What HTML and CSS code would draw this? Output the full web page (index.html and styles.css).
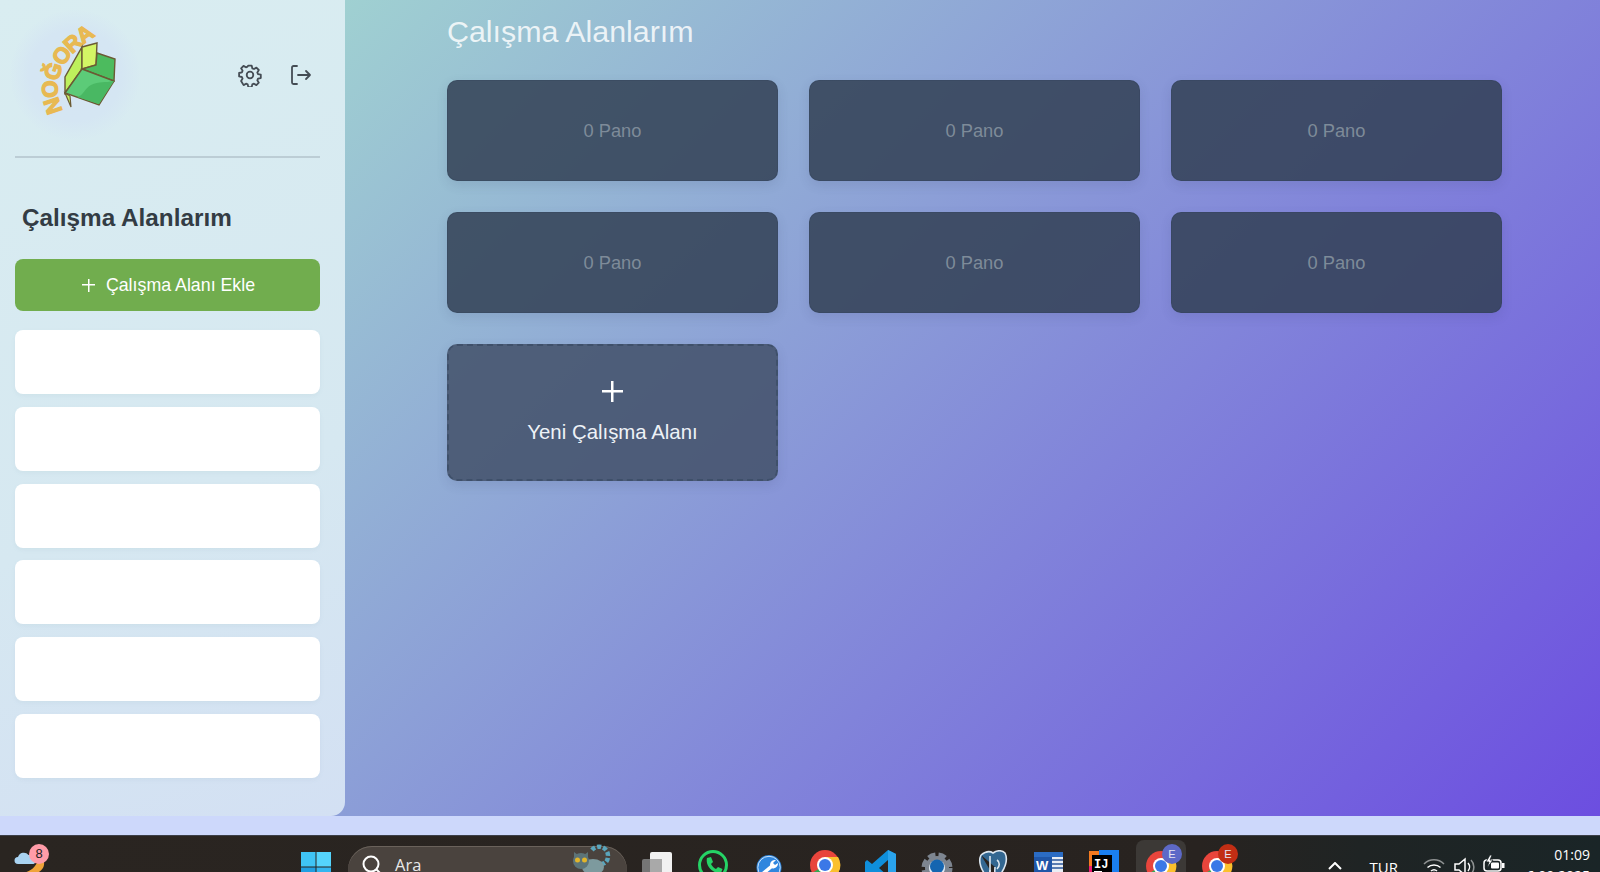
FILE: index.html
```html
<!DOCTYPE html>
<html lang="tr">
<head>
<meta charset="utf-8">
<title>Çalışma Alanlarım</title>
<link rel="stylesheet" href="styles.css">
</head>
<body>
<div class="app">
  <aside class="sidebar">
    <div class="side-head">
      <div class="logo">
        <svg viewBox="0 0 130 130" width="130" height="130">
          <defs><path id="arc" d="M53 101 Q 33 58 87 25"/></defs>
          <text class="logo-text"><textPath href="#arc">NOĞORA</textPath></text>
          <path d="M55 83l6 14-1-11z" fill="#c7ee63" stroke="#6b5a34" stroke-width="1.200"/>
          <path d="M55 83V67L72 37v22z" fill="#bdf05c" stroke="#6b5a34" stroke-width="1.400"/>
          <path d="M72 37l15-4-1 22-14 4z" fill="#d3f565" stroke="#6b5a34" stroke-width="1.400"/>
          <path d="M87 43l18 6-1 22-32-12 14-4z" fill="#4cbb5e" stroke="#6b5a34" stroke-width="1.400"/>
          <path d="M72 59l32 12-15 24-34-12z" fill="#5ccb78" stroke="#6b5a34" stroke-width="1.400"/>
          <path d="M104 71L89 94 67 87c6-1 8-9 14-12 8-4 14-2 23-4z" fill="#49b863"/>
        </svg>
      </div>
      <div class="head-icons">
        <svg class="icon" viewBox="0 0 24 24" width="24" height="24"><path d="M10.300 2.600h3.400l.6 2.700 1.700.7 2.400-1.400 2.400 2.400-1.500 2.400.7 1.700 2.800.6v3.400l-2.800.6-.7 1.600 1.500 2.400-2.400 2.400-2.400-1.400-1.700.7-.6 2.700h-3.400l-.6-2.700-1.700-.7-2.400 1.400L3.100 18l1.500-2.400-.7-1.600-2.800-.6V10l2.800-.6.7-1.700L3.100 5.300l2.400-2.400 2.400 1.400 1.700-.7z"/><circle cx="12" cy="12" r="3.300"/></svg>
        <svg class="icon" viewBox="0 0 24 24" width="24" height="24"><path d="M8 3H4.500A1.500 1.500 0 0 0 3 4.500v15A1.500 1.500 0 0 0 4.500 21H8M9 12h12M17 8l4 4-4 4"/></svg>
      </div>
    </div>
    <hr class="divider">
    <h2 class="side-title">Çalışma Alanlarım</h2>
    <button class="add-btn"><span class="plus-sm"></span>Çalışma Alanı Ekle</button>
    <ul class="side-list">
      <li></li><li></li><li></li><li></li><li></li><li></li>
    </ul>
  </aside>
  <main class="main">
    <h1 class="main-title">Çalışma Alanlarım</h1>
    <div class="grid">
      <div class="card">0 Pano</div>
      <div class="card">0 Pano</div>
      <div class="card">0 Pano</div>
      <div class="card">0 Pano</div>
      <div class="card">0 Pano</div>
      <div class="card">0 Pano</div>
      <div class="card new"><span class="plus-lg"></span><span>Yeni Çalışma Alanı</span></div>
    </div>
  </main>
</div>
<div class="strip"></div>
<footer class="taskbar">
  <div class="weather">
    <svg viewBox="0 0 36 37" width="36" height="37">
      <path d="M12 37c9-1 15-7 16-14l6 3c1 6-4 11-9 11z" fill="#f0a43a"/>
      <path d="M8 28a3.500 3.500 0 0 1 0-7 6 6 0 0 1 10.500-2 4.500 4.500 0 0 1 6 4.500 2.500 2.500 0 0 1-1 4.500z" fill="#a9d3f2"/>
    </svg>
    <span class="badge">8</span>
  </div>
  <div class="task-center">
    <svg class="win" viewBox="0 0 32 32" width="32" height="32">
      <rect x="1" y="1" width="14.500" height="14.500" fill="#3fc4f5"/><rect x="16.500" y="1" width="14.500" height="14.500" fill="#55d4fc"/>
      <rect x="1" y="16.500" width="14.500" height="14.500" fill="#1f9fe2"/><rect x="16.500" y="16.500" width="14.500" height="14.500" fill="#33b6f0"/>
    </svg>
    <div class="search">
      <svg class="lens" viewBox="0 0 24 24" width="24" height="24"><circle cx="11" cy="11" r="7.500"/><path d="M16.500 16.500L21 21"/></svg>
      <span class="search-text">Ara</span>
      <svg class="lemur" viewBox="0 0 40 32" width="40" height="32">
        <path d="M20 6a9 9 0 0 1 16 6c0 5-3 8-7 8" fill="none" stroke="#5aa6bd" stroke-width="4.500" stroke-dasharray="4 2"/>
        <ellipse cx="21" cy="23" rx="11" ry="8" fill="#7d9a9e"/>
        <circle cx="9" cy="17" r="8" fill="#5c7478"/>
        <path d="M2 8l4 3-4 3zM16 8l-4 3 4 3z" fill="#5c7478"/>
        <circle cx="5.500" cy="16" r="2.500" fill="#e2b52a"/><circle cx="12.500" cy="16" r="2.500" fill="#e2b52a"/>
      </svg>
    </div>
    <div class="apps">
      <svg viewBox="0 0 34 36" width="34" height="36"><rect x="2" y="9" width="20" height="27" rx="2" fill="#757575"/><rect x="10" y="2" width="22" height="34" rx="2" fill="#f1f1f1"/><rect x="10" y="9" width="12" height="27" fill="#a9a9a9"/></svg>
      <svg viewBox="0 0 34 36" width="34" height="36"><circle cx="17" cy="15" r="13.500" fill="none" stroke="#25d366" stroke-width="3"/><path d="M11 8c-2 8 6 16 14 15l1.500-4-4.500-2-2 2c-2-.5-4-3-5-5l2-2-2-5z" fill="#25d366"/></svg>
      <svg viewBox="0 0 34 36" width="34" height="36"><circle cx="17" cy="17.500" r="12.500" fill="#2f86de"/><circle cx="17" cy="17.500" r="11.200" fill="none" stroke="#cfe6fa" stroke-width="1"/><path d="M8 26l12-10" stroke="#fff" stroke-width="3.500"/><path d="M18 15a5 5 0 0 1 6-5l-3 3 2 2 3-2a5 5 0 0 1-7 5z" fill="#fff"/></svg>
      <svg viewBox="0 0 34 36" width="34" height="36"><circle cx="17" cy="15" r="15" fill="#e8453c"/><path d="M17 15L4 23a15 15 0 0 0 15 7z" fill="#34a853"/><path d="M17 7h13a15 15 0 0 1-11 23z" fill="#fbc02d"/><circle cx="17" cy="15" r="8" fill="#fff"/><circle cx="17" cy="15" r="6" fill="#3b78e7"/></svg>
      <svg viewBox="0 0 34 36" width="34" height="36"><path d="M24 0l8 4v28l-8 4L8 22l-5 4-2-2V12l2-2 5 4z" fill="#0f8fdb"/><path d="M24 10l-9 8 9 8z" fill="#2a2521"/><path d="M24 0l8 4v28l-8 4z" fill="#2aa3ec"/></svg>
      <svg viewBox="0 0 34 36" width="34" height="36"><circle cx="17" cy="18" r="12.500" fill="none" stroke="#7d8590" stroke-width="6" stroke-dasharray="7 3"/><circle cx="17" cy="18" r="12" fill="#7d8590"/><circle cx="17" cy="18" r="8" fill="#dfe9f3"/><circle cx="17" cy="16.500" r="7" fill="#1565b0"/></svg>
      <svg viewBox="0 0 34 36" width="34" height="36"><path d="M5 5c5-4 9-4 12-2 4-3 9-3 12 0 3 6 0 14-3 19 0 4-3 7-6 5-2-3-1-7-1-10M5 5c-3 6 0 13 3 18 3 4 6 1 6-3" fill="#336791" stroke="#dce6ef" stroke-width="1.600"/><path d="M14 6v16c0 5 3 7 5 9M21 10c3 2 3 6 0 9" fill="none" stroke="#dce6ef" stroke-width="1.600"/></svg>
      <svg viewBox="0 0 34 36" width="34" height="36"><rect x="2" y="2" width="29" height="34" fill="#e9eef5"/><rect x="2" y="2" width="29" height="5" fill="#2b6cc4"/><path d="M20 10h11M20 14h11M20 18h11" stroke="#2b579a" stroke-width="1.500"/><rect x="2" y="7" width="18" height="29" fill="#1f56a8"/><text x="4" y="20" class="w">W</text></svg>
      <svg viewBox="0 0 34 36" width="34" height="36"><path d="M1 1h10v26H1z" fill="#f47a20"/><path d="M11 0h20v22H11z" fill="#1a7ff0"/><path d="M1 16h6v20H1z" fill="#ec1e73"/><rect x="4" y="5" width="20" height="31" fill="#000"/><text x="6" y="18" class="ij">IJ</text><rect x="6" y="21" width="8" height="1.500" fill="#fff"/></svg>
      <div class="chrome active">
        <svg viewBox="0 0 34 36" width="34" height="36"><circle cx="17" cy="16" r="15" fill="#e8453c"/><path d="M17 16L4 24a15 15 0 0 0 15 7z" fill="#34a853"/><path d="M17 8h13a15 15 0 0 1-11 23z" fill="#fbc02d"/><circle cx="17" cy="16" r="8" fill="#fff"/><circle cx="17" cy="16" r="6" fill="#3b78e7"/></svg>
        <span class="avatar purple">E</span>
      </div>
      <div class="chrome">
        <svg viewBox="0 0 34 36" width="34" height="36"><circle cx="17" cy="16" r="15" fill="#e8453c"/><path d="M17 16L4 24a15 15 0 0 0 15 7z" fill="#34a853"/><path d="M17 8h13a15 15 0 0 1-11 23z" fill="#fbc02d"/><circle cx="17" cy="16" r="8" fill="#fff"/><circle cx="17" cy="16" r="6" fill="#3b78e7"/></svg>
        <span class="avatar red">E</span>
      </div>
    </div>
  </div>
  <div class="tray">
    <svg class="chev" viewBox="0 0 14 8" width="14" height="8"><path d="M1 7l6-6 6 6"/></svg>
    <span class="lang">TUR</span>
    <div class="tray-icons">
      <svg viewBox="0 0 22 22" width="22" height="22"><path d="M1 9a14 14 0 0 1 20 0" opacity=".5"/><path d="M4.500 12.500a9.500 9.500 0 0 1 13 0M8 16a4.500 4.500 0 0 1 6 0"/><circle cx="11" cy="19" r="1.500" fill="#fff"/></svg>
      <svg viewBox="0 0 22 22" width="22" height="22"><path d="M2 9h4l6-5v16l-6-5H2zM15 8a6 6 0 0 1 0 8"/><path d="M18 5a10 10 0 0 1 0 14" opacity=".5"/></svg>
      <svg viewBox="0 0 22 22" width="22" height="22"><rect x="1" y="5" width="17" height="11" rx="3"/><rect x="19" y="8" width="2.500" height="5" fill="#fff" stroke="none"/><rect x="8" y="7.500" width="8" height="6" rx="1" fill="#fff" stroke="none"/><path d="M7 0L3 7h3L4 13l6-8H7l2-5z" fill="#fff" stroke="#1c2526" stroke-width=".8"/></svg>
    </div>
    <div class="clock"><span>01:09</span><span>6.09.2025</span></div>
  </div>
</footer>
</body>
</html>
```
FILE: styles.css
```css
* { box-sizing: border-box; }
html, body { margin: 0; height: 872px; overflow: hidden; }
body { width: 1600px; font-family: "Liberation Sans", Arial, sans-serif; background: #cdd8fb; }
.app { display: flex; height: 816px; background: linear-gradient(135deg, #a8e6cf 0%, #6c4ee0 100%); }
.sidebar { width: 345px; height: 816px; padding: 0 25px 0 15px; border-bottom-right-radius: 14px; background: linear-gradient(160deg, #d9edf1 0%, #d6e8f1 60%, #d3e0f3 100%); flex: none; }
.side-head { display: flex; align-items: center; justify-content: space-between; height: 156px; padding-bottom: 6px; }
.logo { width: 130px; height: 130px; margin-left: -5px; border-radius: 50%; background: radial-gradient(circle, #d5e5f3 0%, #d5e6f3 50%, rgba(214,232,241,0) 72%); }
.logo-text { font: bold 22px "Liberation Sans", sans-serif; letter-spacing: -1.500px; fill: #e8b952; stroke: #e8b952; stroke-width: 1.300; }
.head-icons { display: flex; gap: 27px; padding-right: 7px; }
.icon { fill: none; stroke: #444c54; stroke-width: 1.800; stroke-linecap: round; stroke-linejoin: round; }
.divider { margin: 0; border: 0; height: 2px; background: #bccdd5; }
.side-title { margin: 46px 0 27px 7px; font-size: 24.300px; line-height: 28px; font-weight: 700; color: #333c44; }
.add-btn { display: flex; align-items: center; justify-content: center; gap: 11px; width: 100%; height: 52px; padding: 0 0 0 2px; border: 0; border-radius: 8px; background: #71ad4e; color: #fff; font: 17.800px "Liberation Sans", sans-serif; }
.plus-sm, .plus-lg { display: block; flex: none; }
.plus-sm { width: 13px; height: 13px; background: linear-gradient(#fff, #fff) center/13px 1.500px no-repeat, linear-gradient(#fff, #fff) center/1.500px 13px no-repeat; }
.side-list { list-style: none; margin: 19px 0 0; padding: 0; display: flex; flex-direction: column; gap: 12.800px; }
.side-list li { height: 64px; border-radius: 8px; background: #fff; box-shadow: 0 2px 4px rgba(120,150,170,.08); }
.main { flex: 1; padding: 0 98px 0 102px; }
.main-title { margin: 13px 0 30px; font-size: 30.400px; line-height: 37px; font-weight: 400; color: rgba(255,255,255,.82); }
.grid { display: grid; grid-template-columns: repeat(3, 1fr); gap: 31px; }
.card { display: flex; align-items: center; justify-content: center; height: 101px; padding-top: 1px; border-radius: 10px; background: rgba(49,63,83,.85); border: 1px solid rgba(45,58,85,.25); color: #7e8b99; font-size: 18.300px; box-shadow: 0 4px 12px rgba(40,50,90,.12); }
.card.new { flex-direction: column; height: 137px; gap: 19px; padding-top: 0; background: rgba(66,80,104,.85); border: 2px dashed #3f506a; color: #eef2f7; font-size: 20.400px; }
.plus-lg { width: 21px; height: 21px; background: linear-gradient(#fff, #fff) center/21px 2.500px no-repeat, linear-gradient(#fff, #fff) center/2.500px 21px no-repeat; }
.strip { height: 19px; background: #cdd8fb; }
.taskbar { display: flex; align-items: flex-start; height: 37px; overflow: hidden; background: linear-gradient(90deg, #2a2521 0%, #282320 75%, #1f2424 85%, #1a2527 100%); border-top: 1px solid #3c3f48; }
.weather { position: relative; flex: none; width: 50px; height: 37px; margin-left: 10px; }
.badge { position: absolute; left: 19px; top: 8px; width: 20px; height: 20px; border-radius: 50%; background: #ff9ca8; color: #222; font-size: 13px; line-height: 20px; text-align: center; }
.task-center { display: flex; align-items: flex-start; flex: none; margin-left: 240px; }
.win { margin-top: 15px; flex: none; }
.search { position: relative; display: flex; align-items: flex-start; gap: 11px; flex: none; width: 279px; height: 50px; margin: 10px 0 0 16px; padding: 7px 12px; border-radius: 24px; background: #4a433e; box-shadow: inset 0 1px 0 #6a625b; }
.lens { fill: none; stroke: #fff; stroke-width: 2; flex: none; }
.search-text { font: 16.500px "Open Sans", sans-serif; color: #e8e8e8; }
.lemur { position: absolute; right: 15px; top: -2px; }
.apps { display: flex; align-items: flex-start; margin-left: 13px; gap: 22px; }
.apps > svg { margin-top: 14px; flex: none; }
.chrome { position: relative; flex: none; width: 50px; height: 50px; padding: 10px 0 0 8px; margin: 4px -8px 0; border-radius: 8px; }
.chrome.active { background: #3c3936; }
.avatar { position: absolute; left: 26px; top: 4px; width: 20px; height: 20px; border-radius: 50%; color: #e6e6f2; font-size: 11px; line-height: 20px; text-align: center; }
.purple { background: #5d69c7; }
.red { background: #c22e14; }
.tray { display: flex; align-items: flex-start; flex: none; margin-left: auto; color: #fff; }
.chev { margin-top: 26px; flex: none; fill: none; stroke: #fff; stroke-width: 2; }
.lang { margin: 21px 0 0 28px; font: 15px "Open Sans", sans-serif; }
.tray-icons { display: flex; gap: 8px; margin: 19px 0 0 25px; }
.tray-icons svg { fill: none; stroke: #fff; stroke-width: 1.500; }
.clock { display: flex; flex-direction: column; align-items: flex-end; width: 95px; padding: 8px 10px 0 0; font: 14px/21px "Open Sans", sans-serif; }
.w { font: bold 13px "Liberation Sans", sans-serif; fill: #fff; }
.ij { font: bold 12px "Liberation Mono", monospace; fill: #fff; }
```
